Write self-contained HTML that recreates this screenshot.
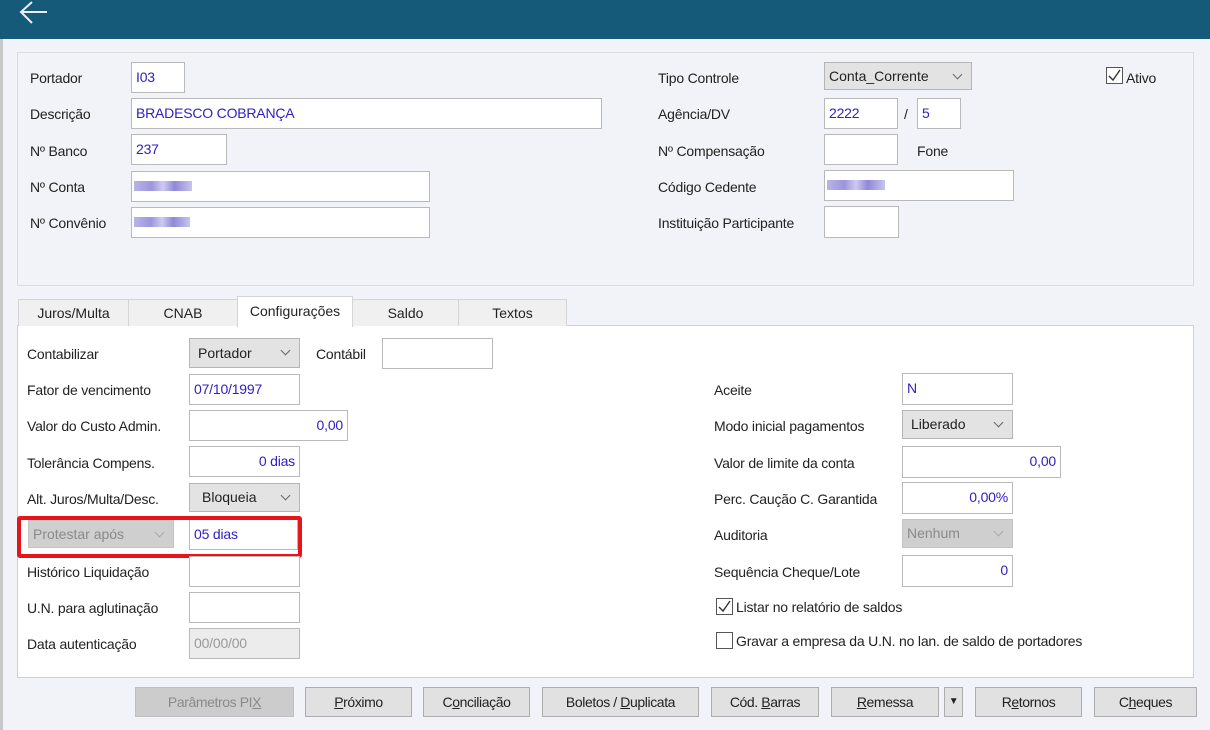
<!DOCTYPE html>
<html><head><meta charset="utf-8"><style>
*{box-sizing:border-box;margin:0;padding:0}
body{width:1210px;height:730px;background:#f2f3f8;font-family:"Liberation Sans",sans-serif;font-size:14px;color:#222;position:relative;overflow:hidden}
.a{position:absolute}
.hdr{left:0;top:0;width:1210px;height:39px;background:#155a78}
.lb{position:absolute;white-space:nowrap;line-height:18px;letter-spacing:-0.2px}
.in{position:absolute;background:#fff;border:1px solid #b9b9b9;color:#3020c0;padding-left:4px;line-height:29px;white-space:nowrap;letter-spacing:-0.2px}
.in.r{text-align:right;padding-right:4px}
.sel{position:absolute;background:#e3e3e3;border:1px solid #b5b5b5;line-height:26px;padding-left:8px;color:#222}
.sel:after{content:"";position:absolute;right:10px;top:8px;width:6px;height:6px;border-right:1px solid #666;border-bottom:1px solid #666;transform:rotate(45deg)}
.sel.d{background:#cfcfcf;color:#8a8a8a;border-color:#c4c4c4}
.sel.d:after{border-color:#aaa}
.tab{position:absolute;top:299px;height:27px;background:#f0f0f0;border:1px solid #d5d5d5;border-bottom:none;text-align:center;line-height:27px}
.btn{position:absolute;top:687px;height:30px;background:#e1e1e1;border:1px solid #adadad;text-align:center;line-height:28px;font-size:14px;letter-spacing:-0.4px}
.cb{position:absolute;width:17px;height:17px;border:1px solid #555;background:#fff}
.blur{position:absolute;height:10px;background:linear-gradient(90deg,#b8b4e8 0,#9c96dc 30%,#cfcaf0 50%,#8f88d8 70%,#c8c4ee 100%)}
</style></head><body>
<div class="a" style="left:0;top:0;width:3px;height:730px;background:#c8c8c8"></div>
<div class="a hdr"></div>
<svg class="a" style="left:18px;top:0" width="34" height="26"><path d="M29 12H3M14 2L3 12L14 23" stroke="#e8eef2" stroke-width="2" fill="none"/></svg>

<div class="a" style="left:17px;top:52px;width:1177px;height:234px;border:1px solid #dcdcdc"></div>
<div class="lb" style="left:30px;top:69px">Portador</div>
<div class="in" style="left:131px;top:62px;width:54px;height:31px">I03</div>
<div class="lb" style="left:30px;top:105px">Descrição</div>
<div class="in" style="left:131px;top:98px;width:471px;height:31px">BRADESCO COBRANÇA</div>
<div class="lb" style="left:30px;top:142px">Nº Banco</div>
<div class="in" style="left:131px;top:134px;width:96px;height:31px">237</div>
<div class="lb" style="left:30px;top:178px">Nº Conta</div>
<div class="in" style="left:131px;top:171px;width:299px;height:31px"></div>
<div class="blur" style="left:134px;top:181px;width:58px"></div>
<div class="lb" style="left:30px;top:214px">Nº Convênio</div>
<div class="in" style="left:131px;top:207px;width:299px;height:31px"></div>
<div class="blur" style="left:134px;top:217px;width:56px"></div>

<div class="lb" style="left:658px;top:69px">Tipo Controle</div>
<div class="sel" style="left:824px;top:62px;width:148px;height:28px;padding-left:4px">Conta_Corrente</div>
<div class="cb" style="left:1106px;top:67px"></div>
<svg class="a" style="left:1106px;top:67px" width="17" height="17"><path d="M3 9L7 13L14 3" stroke="#333" stroke-width="1.4" fill="none"/></svg>
<div class="lb" style="left:1126px;top:69px">Ativo</div>
<div class="lb" style="left:658px;top:105px">Agência/DV</div>
<div class="in" style="left:824px;top:98px;width:74px;height:31px">2222</div>
<div class="lb" style="left:904px;top:105px">/</div>
<div class="in" style="left:917px;top:98px;width:44px;height:31px">5</div>
<div class="lb" style="left:658px;top:142px">Nº Compensação</div>
<div class="in" style="left:824px;top:134px;width:74px;height:31px"></div>
<div class="lb" style="left:917px;top:142px">Fone</div>
<div class="lb" style="left:658px;top:178px">Código Cedente</div>
<div class="in" style="left:824px;top:170px;width:190px;height:31px"></div>
<div class="blur" style="left:827px;top:180px;width:58px"></div>
<div class="lb" style="left:658px;top:214px">Instituição Participante</div>
<div class="in" style="left:824px;top:206px;width:75px;height:32px"></div>

<div class="a" style="left:17px;top:325px;width:1177px;height:353px;background:#fff;border:1px solid #d0d0d0"></div>
<div class="tab" style="left:18px;width:111px">Juros/Multa</div>
<div class="tab" style="left:128px;width:110px">CNAB</div>
<div class="tab" style="left:352px;width:107px">Saldo</div>
<div class="tab" style="left:458px;width:109px">Textos</div>
<div class="tab" style="left:237px;top:296px;height:31px;width:116px;background:#fff;line-height:28px">Configurações</div>

<div class="lb" style="left:27px;top:345px">Contabilizar</div>
<div class="sel" style="left:189px;top:338px;width:111px;height:30px;line-height:28px">Portador</div>
<div class="lb" style="left:316px;top:345px">Contábil</div>
<div class="in" style="left:382px;top:338px;width:111px;height:31px"></div>
<div class="lb" style="left:27px;top:381px">Fator de vencimento</div>
<div class="in" style="left:189px;top:374px;width:111px;height:31px">07/10/1997</div>
<div class="lb" style="left:27px;top:417px">Valor do Custo Admin.</div>
<div class="in r" style="left:189px;top:410px;width:159px;height:31px">0,00</div>
<div class="lb" style="left:27px;top:454px">Tolerância Compens.</div>
<div class="in r" style="left:189px;top:446px;width:111px;height:31px">0 dias</div>
<div class="lb" style="left:27px;top:490px">Alt. Juros/Multa/Desc.</div>
<div class="sel" style="left:189px;top:483px;width:111px;height:29px;padding-left:12px">Bloqueia</div>
<div class="sel d" style="left:28px;top:520px;width:146px;height:28px;padding-left:4px">Protestar após</div>
<div class="in" style="left:189px;top:519px;width:109px;height:31px">05 dias</div>
<div class="a" style="left:17px;top:516px;width:285px;height:42px;border:4px solid #e8141b;border-radius:3px"></div>
<div class="lb" style="left:27px;top:563px">Histórico Liquidação</div>
<div class="in" style="left:189px;top:556px;width:111px;height:31px"></div>
<div class="lb" style="left:27px;top:599px">U.N. para aglutinação</div>
<div class="in" style="left:189px;top:592px;width:111px;height:31px"></div>
<div class="lb" style="left:27px;top:635px">Data autenticação</div>
<div class="in" style="left:189px;top:628px;width:111px;height:31px;background:#ececec;color:#999">00/00/00</div>

<div class="lb" style="left:714px;top:381px">Aceite</div>
<div class="in" style="left:902px;top:373px;width:111px;height:32px">N</div>
<div class="lb" style="left:714px;top:417px">Modo inicial pagamentos</div>
<div class="sel" style="left:902px;top:410px;width:111px;height:29px">Liberado</div>
<div class="lb" style="left:714px;top:454px">Valor de limite da conta</div>
<div class="in r" style="left:902px;top:446px;width:159px;height:32px">0,00</div>
<div class="lb" style="left:714px;top:490px">Perc. Caução C. Garantida</div>
<div class="in r" style="left:902px;top:482px;width:111px;height:32px">0,00%</div>
<div class="lb" style="left:714px;top:526px">Auditoria</div>
<div class="sel d" style="left:902px;top:519px;width:111px;height:29px;padding-left:4px">Nenhum</div>
<div class="lb" style="left:714px;top:563px">Sequência Cheque/Lote</div>
<div class="in r" style="left:902px;top:555px;width:111px;height:32px">0</div>
<div class="cb" style="left:716px;top:598px"></div>
<svg class="a" style="left:716px;top:598px" width="17" height="17"><path d="M3 9L7 13L14 3" stroke="#333" stroke-width="1.4" fill="none"/></svg>
<div class="lb" style="left:736px;top:598px">Listar no relatório de saldos</div>
<div class="cb" style="left:716px;top:632px"></div>
<div class="lb" style="left:736px;top:632px">Gravar a empresa da U.N. no lan. de saldo de portadores</div>

<div class="btn" style="left:135px;width:159px;background:#cccccc;border-color:#c0c0c0;color:#8a8a8a">Parâmetros PI<u>X</u></div>
<div class="btn" style="left:305px;width:107px"><u>P</u>róximo</div>
<div class="btn" style="left:423px;width:107px">C<u>o</u>nciliação</div>
<div class="btn" style="left:542px;width:157px">Boletos / <u>D</u>uplicata</div>
<div class="btn" style="left:711px;width:108px">Cód. <u>B</u>arras</div>
<div class="btn" style="left:831px;width:108px"><u>R</u>emessa</div>
<div class="btn" style="left:944px;width:19px;font-size:10px">▼</div>
<div class="btn" style="left:975px;width:107px">R<u>e</u>tornos</div>
<div class="btn" style="left:1094px;width:103px">C<u>h</u>eques</div>
</body></html>
